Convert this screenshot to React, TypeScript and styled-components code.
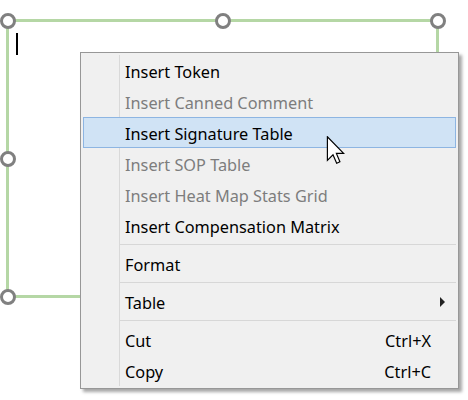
import React from 'react'
import styled, { createGlobalStyle } from 'styled-components'

const COLORS = {
  green: '#b5d7a5',
  handle: '#808080',
  menuBg: '#f0f0f0',
  menuBorder: '#979797',
  gutter: '#d9d9d9',
  sep: '#d7d7d7',
  text: '#000000',
  disabled: '#7d7d7d',
  hoverBg: '#d0e3f5',
  hoverBorder: '#8db5e2',
}

const GlobalStyle = createGlobalStyle`
  html, body {
    margin: 0;
    padding: 0;
    background: #ffffff;
  }
  body {
    font-family: 'Noto Sans', 'Open Sans', sans-serif;
  }
`

const Canvas = styled.div`
  position: relative;
  width: 468px;
  height: 400px;
  box-sizing: border-box;
  padding: 19px 0 0 6px;
  overflow: hidden;
  background: #ffffff;
`

// selected text box on the design surface
const Frame = styled.div`
  position: relative;
  width: 433px;
  height: 279px;
  box-sizing: border-box;
  padding: 11px 0 0 7px;
  border: 3px solid ${COLORS.green};
`

const Caret = styled.div`
  width: 2px;
  height: 22px;
  background: #000;
`

// $x / $y: 0 = start edge, 1 = middle, 2 = end edge (centred on the border line)
const Handle = styled.div<{ $x: number; $y: number }>`
  position: absolute;
  left: calc(${({ $x }) => $x * 50}% + ${({ $x }) => ($x - 1) * 1.5}px);
  top: calc(${({ $y }) => $y * 50}% + ${({ $y }) => ($y - 1) * 1.5}px);
  width: 16px;
  height: 16px;
  margin: -8px 0 0 -8px;
  box-sizing: border-box;
  border: 3px solid ${COLORS.handle};
  border-radius: 50%;
  background: #ffffff;
`

const Menu = styled.div`
  position: absolute;
  left: 80px;
  top: 52px;
  width: 379px;
  box-sizing: border-box;
  padding: 2px;
  background: ${COLORS.menuBg};
  border: 1px solid ${COLORS.menuBorder};
  box-shadow: 3px 3px 3px rgba(0, 0, 0, 0.35);
  font-size: 16.3px;
  color: ${COLORS.text};
  display: flex;
  flex-direction: column;

  &::before {
    content: '';
    position: absolute;
    left: 38px;
    top: 2px;
    bottom: 2px;
    width: 1px;
    background: ${COLORS.gutter};
  }
`

const Item = styled.div<{ $disabled?: boolean; $active?: boolean }>`
  position: relative;
  height: 31px;
  box-sizing: border-box;
  display: grid;
  grid-template-columns: 41px 1fr auto 24px;
  align-items: center;
  color: ${({ $disabled }) => ($disabled ? COLORS.disabled : COLORS.text)};
  background: ${({ $active }) => ($active ? COLORS.hoverBg : 'transparent')};
  border: 1px solid ${({ $active }) => ($active ? COLORS.hoverBorder : 'transparent')};
  white-space: nowrap;
  line-height: 20px;
`

const Label = styled.span`
  grid-column: 2;
  padding-top: 2px;
`

const Shortcut = styled.span`
  grid-column: 3;
  padding-top: 2px;
  text-align: right;
`

const Arrow = styled.span`
  grid-column: 4;
  width: 0;
  height: 0;
  margin-left: 9px;
  border-top: 5px solid transparent;
  border-bottom: 5px solid transparent;
  border-left: 5px solid #222;
`

const Separator = styled.div`
  height: 7px;
  display: flex;
  align-items: center;
  padding-left: 37px;

  &::after {
    content: '';
    flex: 1;
    height: 1px;
    background: ${COLORS.sep};
  }
`

const Pointer = styled.svg`
  position: absolute;
  left: 326px;
  top: 136px;
  width: 19px;
  height: 28px;
`

type Entry =
  | { kind: 'item'; label: string; disabled?: boolean; active?: boolean; shortcut?: string; submenu?: boolean }
  | { kind: 'sep' }

const entries: Entry[] = [
  { kind: 'item', label: 'Insert Token' },
  { kind: 'item', label: 'Insert Canned Comment', disabled: true },
  { kind: 'item', label: 'Insert Signature Table', active: true },
  { kind: 'item', label: 'Insert SOP Table', disabled: true },
  { kind: 'item', label: 'Insert Heat Map Stats Grid', disabled: true },
  { kind: 'item', label: 'Insert Compensation Matrix' },
  { kind: 'sep' },
  { kind: 'item', label: 'Format' },
  { kind: 'sep' },
  { kind: 'item', label: 'Table', submenu: true },
  { kind: 'sep' },
  { kind: 'item', label: 'Cut', shortcut: 'Ctrl+X' },
  { kind: 'item', label: 'Copy', shortcut: 'Ctrl+C' },
]

const handles: [number, number][] = [
  [0, 0], [1, 0], [2, 0],
  [0, 1], [2, 1],
  [0, 2], [1, 2], [2, 2],
]

export default function App() {
  return (
    <>
      <GlobalStyle />
      <Canvas>
        <Frame>
          <Caret />
          {handles.map(([x, y], i) => (
            <Handle key={i} $x={x} $y={y} />
          ))}
        </Frame>
        <Menu>
          {entries.map((e, i) =>
            e.kind === 'sep' ? (
              <Separator key={i} />
            ) : (
              <Item key={i} $disabled={e.disabled} $active={e.active}>
                <Label>{e.label}</Label>
                {e.shortcut && <Shortcut>{e.shortcut}</Shortcut>}
                {e.submenu && <Arrow />}
              </Item>
            )
          )}
        </Menu>
        <Pointer viewBox="0 0 12 19">
          <path
            d="M0.5 0.5 L0.5 16.5 L4.3 12.8 L6.8 18.5 L9 17.5 L6.6 11.8 L11.5 11.8 Z"
            fill="#ffffff"
            stroke="#000000"
            strokeWidth="0.8"
            strokeLinejoin="miter"
          />
        </Pointer>
      </Canvas>
    </>
  )
}
